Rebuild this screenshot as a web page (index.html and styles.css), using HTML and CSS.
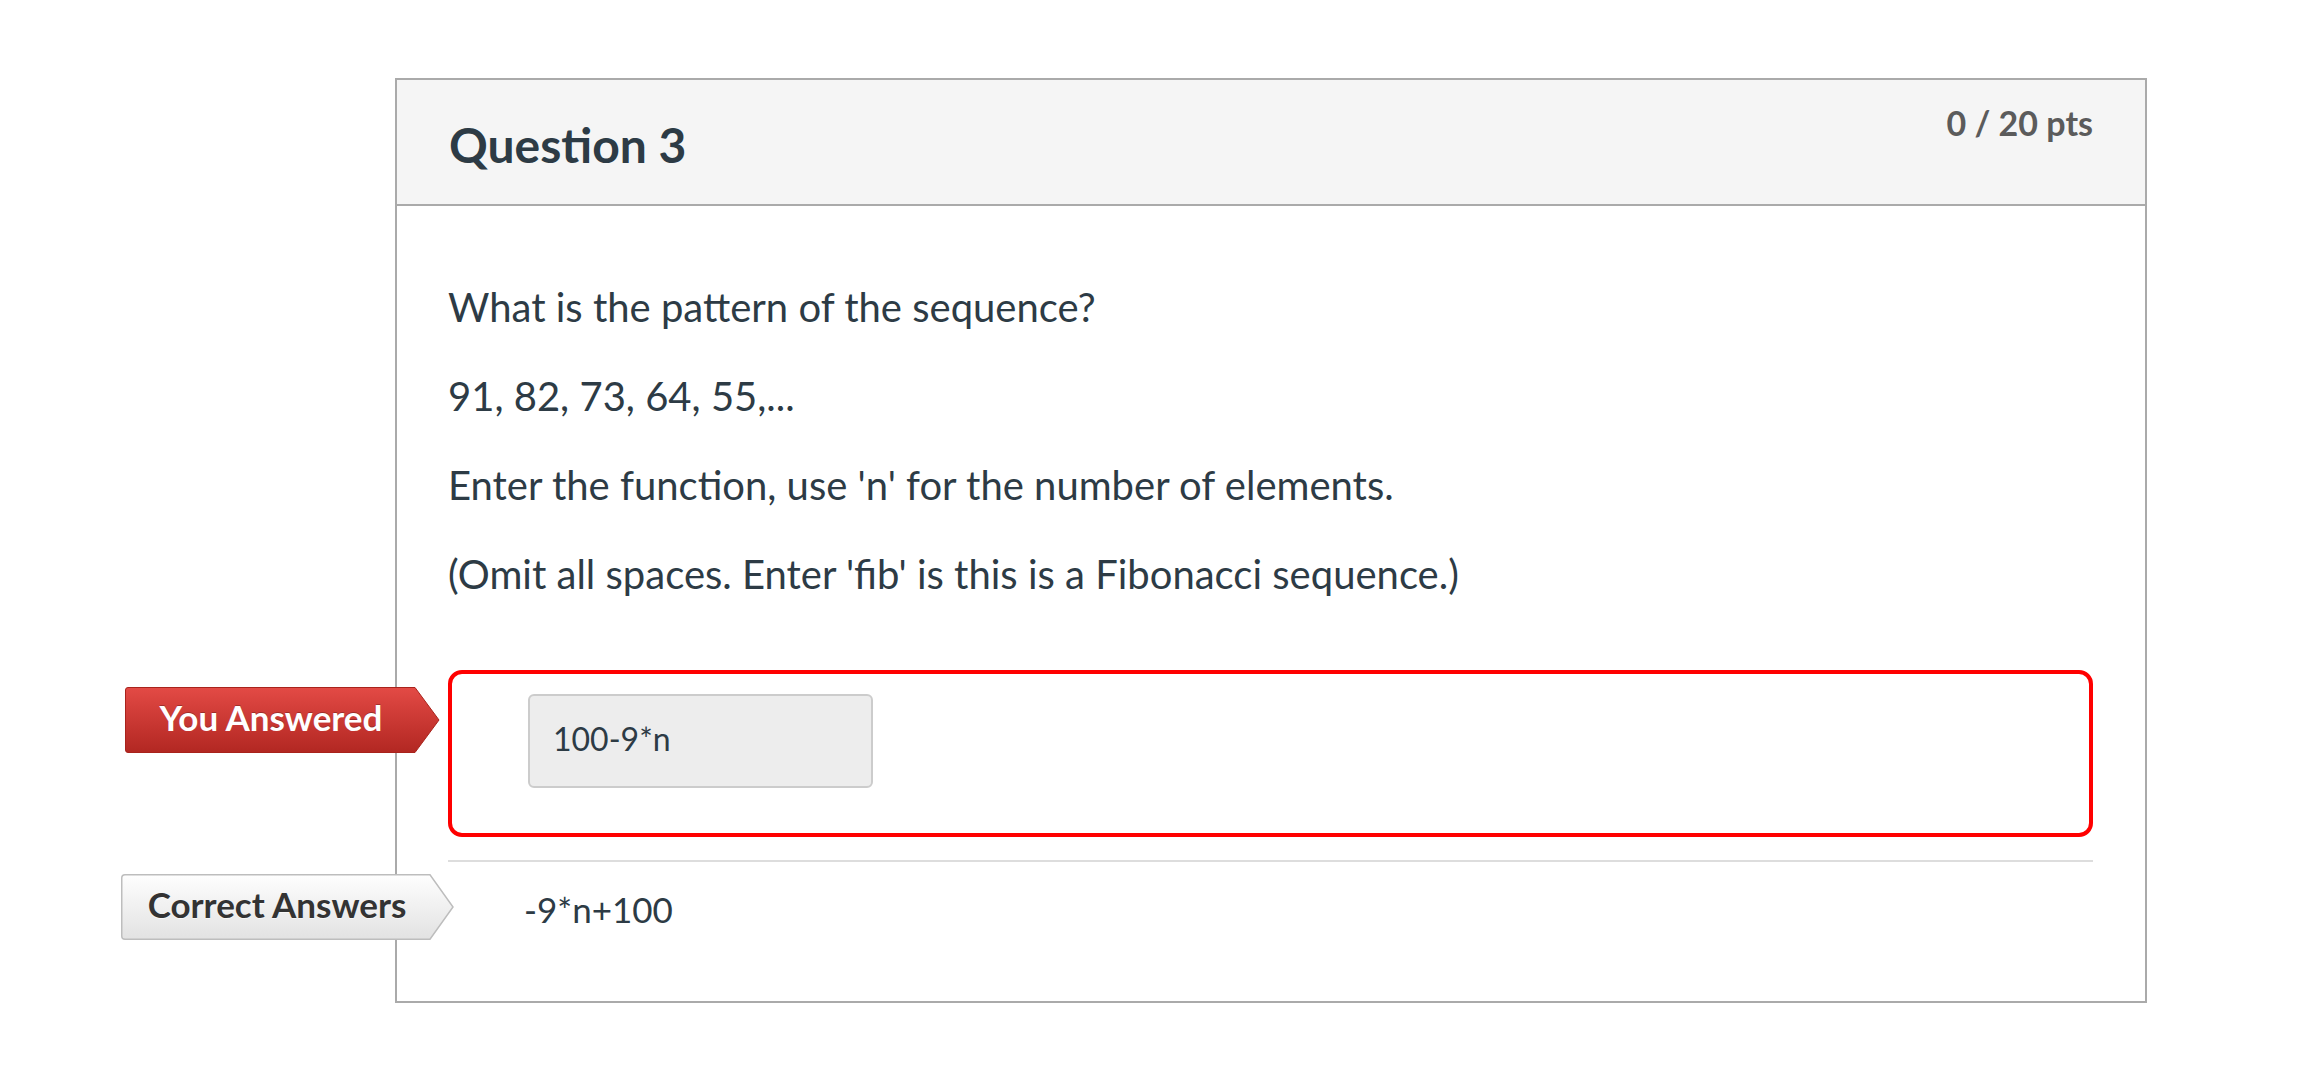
FILE: index.html
```html
<!DOCTYPE html>
<html lang="en">
<head>
<meta charset="utf-8">
<title>Question 3</title>
<link rel="stylesheet" href="styles.css">
</head>
<body>
<div class="card">
  <div class="card-header">
    <h2 class="q-title">Question 3</h2>
    <div class="q-pts">0 / 20 pts</div>
  </div>
  <div class="card-body">
    <p class="q-text">What is the pattern of the sequence?</p>
    <p class="q-text">91, 82, 73, 64, 55,...</p>
    <p class="q-text">Enter the function, use 'n' for the number of elements.</p>
    <p class="q-text">(Omit all spaces. Enter 'fib' is this is a Fibonacci sequence.)</p>

    <div class="answer-row">
      <div class="tag tag-wrong">
        <svg class="tag-shape" width="315" height="66" viewBox="0 0 315 66">
          <defs>
            <linearGradient id="gRed" x1="0" y1="0" x2="0" y2="1">
              <stop offset="0" stop-color="#e34a45"/>
              <stop offset="1" stop-color="#b22722"/>
            </linearGradient>
          </defs>
          <path d="M3 0.5 H290 L314 33 L290 65.5 H3 Q0.5 65.5 0.5 63 V3 Q0.5 0.5 3 0.5 Z" fill="url(#gRed)" stroke="#a8231c" stroke-width="1"/>
        </svg>
        <span class="tag-label">You Answered</span>
      </div>
      <div class="answer-box">
        <div class="answer-input">100-9*n</div>
      </div>
    </div>

    <div class="separator"></div>

    <div class="correct-row">
      <div class="tag tag-correct">
        <svg class="tag-shape" width="333" height="66" viewBox="0 0 333 66">
          <defs>
            <linearGradient id="gGray" x1="0" y1="0" x2="0" y2="1">
              <stop offset="0" stop-color="#fefefe"/>
              <stop offset="1" stop-color="#e2e2e2"/>
            </linearGradient>
          </defs>
          <path d="M4 0.75 H309 L332 33 L309 65.25 H4 Q0.75 65.25 0.75 62 V4 Q0.75 0.75 4 0.75 Z" fill="url(#gGray)" stroke="#bdbdbd" stroke-width="1.5"/>
        </svg>
        <span class="tag-label">Correct Answers</span>
      </div>
      <div class="correct-text">-9*n+100</div>
    </div>
  </div>
</div>
</body>
</html>
```

FILE: styles.css
```css
* { box-sizing: border-box; }

body {
  margin: 0;
  background: #ffffff;
  font-family: Lato, "Liberation Sans", sans-serif;
  color: #2d3b45;
}

.card {
  margin: 78px 0 0 395px;
  width: 1752px;
  border: 2px solid #aaaaaa;
  background: #ffffff;
}

.card-header {
  height: 126px;
  background: #f5f5f5;
  border-bottom: 2px solid #aaaaaa;
  padding: 0 52px;
  display: flex;
  justify-content: space-between;
  align-items: flex-start;
}

.q-title {
  margin: 41px 0 0;
  font-size: 48px;
  line-height: 48px;
  font-weight: 700;
  color: #2d3b45;
}

.q-pts {
  margin-top: 26px;
  font-size: 34px;
  line-height: 34px;
  font-weight: 700;
  color: #5b5b5b;
}

.card-body {
  display: flex;
  flex-direction: column;
  padding: 74px 52px 68px 51px;
}

.q-text {
  margin: 0 0 35px;
  font-size: 40px;
  line-height: 54px;
}

.answer-row {
  position: relative;
  margin-top: 34px;
}

.answer-box {
  height: 167px;
  border: 4px solid #ff0000;
  border-radius: 14px;
  padding: 20px 0 0 76px;
}

.answer-input {
  width: 345px;
  height: 94px;
  background: #ededed;
  border: 2px solid #cccccc;
  border-radius: 6px;
  padding-left: 23px;
  font-size: 32px;
  line-height: 86px;
  color: #2d3b45;
}

.separator {
  margin-top: 23px;
  height: 2px;
  background: #dddddd;
}

.correct-row {
  position: relative;
  padding-top: 23px;
}

.correct-text {
  margin-left: 76px;
  font-size: 35px;
  line-height: 48px;
  color: #2d3b45;
}

.tag {
  position: absolute;
  height: 66px;
  display: flex;
  align-items: flex-start;
}

.tag-shape {
  position: absolute;
  left: 0;
  top: 0;
}

.tag-label {
  position: relative;
  font-size: 35px;
  font-weight: 700;
  line-height: 61px;
  text-align: center;
}

.tag-wrong {
  top: 17px;
  left: -323px;
  width: 315px;
}

.tag-wrong .tag-label {
  width: 292px;
  color: #ffffff;
  text-shadow: 0 -1px 0 rgba(0, 0, 0, 0.25);
}

.tag-correct {
  top: 12px;
  left: -327px;
  width: 333px;
}

.tag-correct .tag-label {
  width: 312px;
  color: #333333;
  text-shadow: 0 1px 0 rgba(255, 255, 255, 0.6);
}
```
